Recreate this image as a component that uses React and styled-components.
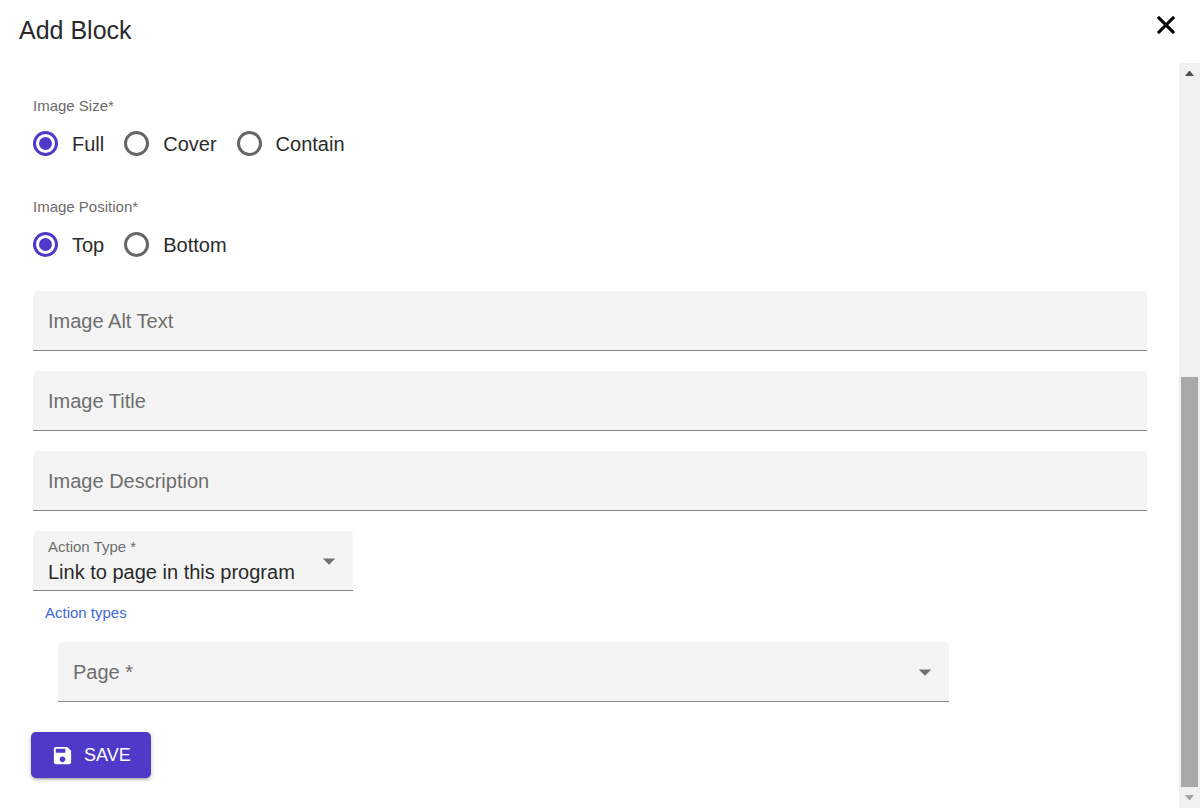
import React, { useState } from 'react';
import styled, { createGlobalStyle } from 'styled-components';

const GlobalStyle = createGlobalStyle`
    * {
        box-sizing: border-box;
    }
    body {
        margin: 0;
        background: #fff;
        color: #2a2a2a;
        font-family: "Liberation Sans", Arial, sans-serif;
        font-size: 20px;
        line-height: 24px;
    }
`;

const Dialog = styled.div`
    display: flex;
    flex-direction: column;
    height: 100vh;
`;

const Header = styled.header`
    display: flex;
    justify-content: space-between;
    align-items: flex-start;
    height: 63px;
    padding: 10px 19px;
`;

const Title = styled.h1`
    margin: 0;
    padding-top: 4px;
    font-size: 25px;
    font-weight: 400;
    line-height: 32px;
`;

const CloseButton = styled.button`
    display: flex;
    padding: 0;
    border: 0;
    background: none;
    cursor: pointer;
`;

const Body = styled.div`
    display: flex;
    flex: 1;
    min-height: 0;
`;

const Form = styled.form`
    flex: 1;
    min-width: 0;
    padding: 33px 32px 24px 33px;
    overflow: hidden;
`;

const RadioGroups = styled.div`
    display: flex;
    flex-direction: column;
    gap: 41px;
    margin-bottom: 34px;
`;

const RadioFieldset = styled.fieldset`
    min-width: 0;
    margin: 0;
    padding: 0;
    border: 0;
`;

const Legend = styled.legend`
    padding: 0;
    color: #6b6b6b;
    font-size: 15px;
    line-height: 20px;
`;

const RadioRow = styled.div`
    display: flex;
    gap: 20px;
    padding-top: 15px;
`;

const RadioLabel = styled.label`
    display: flex;
    align-items: center;
    gap: 14px;
    cursor: pointer;
`;

const Radio = styled.input`
    appearance: none;
    display: grid;
    place-items: center;
    width: 25px;
    height: 25px;
    margin: 0;
    border: 3px solid #666;
    border-radius: 50%;

    &:checked {
        border-color: #4f39c9;
    }

    &:checked::before {
        content: '';
        width: 13px;
        height: 13px;
        border-radius: 50%;
        background: #4f39c9;
    }
`;

const Fields = styled.div`
    display: flex;
    flex-direction: column;
    gap: 20px;
`;

/* label, control and arrow share one grid cell */
const Field = styled.div`
    display: grid;
    width: ${props => props.$width || '100%'};
    height: 60px;
    border-bottom: 1px solid #868686;
    border-radius: 5px 5px 0 0;
    background: #f4f4f4;

    > * {
        grid-area: 1 / 1;
    }
`;

const FieldLabel = styled.label`
    align-self: ${props => (props.$shrink ? 'start' : 'center')};
    padding: ${props => (props.$shrink ? '6px 15px 0' : '0 15px')};
    color: #6e6e6e;
    font-size: ${props => (props.$shrink ? '15px' : '20px')};
    line-height: ${props => (props.$shrink ? '20px' : '24px')};
    pointer-events: none;
`;

const control = `
    width: 100%;
    min-width: 0;
    height: 100%;
    padding: 24px 15px 2px;
    border: 0;
    border-radius: 0;
    outline: 0;
    background: none;
    color: #2a2a2a;
    font: inherit;
`;

const Input = styled.input`
    ${control}
`;

const Select = styled.select`
    ${control}
    appearance: none;
    cursor: pointer;
`;

const Arrow = styled.svg`
    place-self: center end;
    margin-right: 9px;
    fill: #707070;
    pointer-events: none;
`;

const HelpLink = styled.a`
    display: block;
    width: fit-content;
    margin: 12px 0 19px 12px;
    color: #4169d1;
    font-size: 15px;
    line-height: 20px;
    text-decoration: none;
`;

const Nested = styled.div`
    margin-left: 25px;
    margin-right: -25px;
`;

const SaveButton = styled.button`
    display: flex;
    align-items: center;
    gap: 10px;
    height: 46px;
    margin: 30px 0 0 -2px;
    padding: 0 20px;
    border: 0;
    border-radius: 5px;
    background: #4f39c9;
    box-shadow: 0 3px 2px -2px rgba(0, 0, 0, .2), 0 2px 3px rgba(0, 0, 0, .14), 0 1px 6px rgba(0, 0, 0, .12);
    color: #fff;
    font: 400 18px/24px "Liberation Sans", Arial, sans-serif;
    cursor: pointer;
`;

const ScrollTrack = styled.div`
    display: flex;
    flex-direction: column;
    width: 21px;
    background: #f0f0f0;
`;

const ScrollButton = styled.button`
    display: grid;
    place-items: center;
    height: 21px;
    padding: 0;
    border: 0;
    background: none;
    color: ${props => (props.disabled ? '#a3a3a3' : '#505050')};
`;

const ScrollRail = styled.div`
    display: flex;
    flex: 1;
    flex-direction: column;
    justify-content: flex-end;
    padding: 0 2px;
`;

const ScrollThumb = styled.div`
    height: calc(100% * 7 / 12);
    background: #a8a8a8;
`;

const IMAGE_SIZES = ['Full', 'Cover', 'Contain'];
const IMAGE_POSITIONS = ['Top', 'Bottom'];
const TEXT_FIELDS = [
    { id: 'imageAlt', label: 'Image Alt Text' },
    { id: 'imageTitle', label: 'Image Title' },
    { id: 'imageDescription', label: 'Image Description' },
];

const RadioGroup = ({ name, legend, options, value, onChange }) => (
    <RadioFieldset>
        <Legend>{legend}</Legend>
        <RadioRow>
            {options.map(option => (
                <RadioLabel key={option}>
                    <Radio
                        type="radio"
                        name={name}
                        value={option}
                        checked={value === option}
                        onChange={() => onChange(option)}
                    />
                    {option}
                </RadioLabel>
            ))}
        </RadioRow>
    </RadioFieldset>
);

const TextField = ({ id, label }) => {
    const [value, setValue] = useState('');
    const [focused, setFocused] = useState(false);

    return (
        <Field>
            <FieldLabel htmlFor={id} $shrink={focused || value !== ''}>{label}</FieldLabel>
            <Input
                id={id}
                type="text"
                value={value}
                onChange={e => setValue(e.target.value)}
                onFocus={() => setFocused(true)}
                onBlur={() => setFocused(false)}
            />
        </Field>
    );
};

const SelectField = ({ id, label, options, initial = '', width }) => {
    const [value, setValue] = useState(initial);

    return (
        <Field $width={width}>
            <FieldLabel htmlFor={id} $shrink={value !== ''}>{label}</FieldLabel>
            <Select id={id} value={value} onChange={e => setValue(e.target.value)}>
                {options.map(option => <option key={option} value={option}>{option}</option>)}
            </Select>
            <Arrow width="30" height="30" viewBox="0 0 24 24" aria-hidden="true">
                <path d="M7 10l5 5 5-5z" />
            </Arrow>
        </Field>
    );
};

const App = () => {
    const [size, setSize] = useState('Full');
    const [position, setPosition] = useState('Top');

    return (
        <>
            <GlobalStyle />
            <Dialog role="dialog" aria-labelledby="dialogTitle">
                <Header>
                    <Title id="dialogTitle">Add Block</Title>
                    <CloseButton type="button" aria-label="Close">
                        <svg width="30" height="30" viewBox="0 0 24 24" stroke="#000" strokeWidth="0.6" aria-hidden="true">
                            <path d="M19 6.41L17.59 5 12 10.59 6.41 5 5 6.41 10.59 12 5 17.59 6.41 19 12 13.41 17.59 19 19 17.59 13.41 12z" />
                        </svg>
                    </CloseButton>
                </Header>
                <Body>
                    <Form onSubmit={e => e.preventDefault()}>
                        <RadioGroups>
                            <RadioGroup
                                name="imageSize"
                                legend="Image Size*"
                                options={IMAGE_SIZES}
                                value={size}
                                onChange={setSize}
                            />
                            <RadioGroup
                                name="imagePosition"
                                legend="Image Position*"
                                options={IMAGE_POSITIONS}
                                value={position}
                                onChange={setPosition}
                            />
                        </RadioGroups>
                        <Fields>
                            {TEXT_FIELDS.map(field => <TextField key={field.id} {...field} />)}
                            <SelectField
                                id="actionType"
                                label="Action Type *"
                                options={['Link to page in this program']}
                                initial="Link to page in this program"
                                width="320px"
                            />
                        </Fields>
                        <HelpLink href="#action-types">Action types</HelpLink>
                        <Nested>
                            <SelectField id="page" label="Page *" options={['']} width="80%" />
                        </Nested>
                        <SaveButton type="submit">
                            <svg width="23" height="23" viewBox="0 0 24 24" fill="#fff" aria-hidden="true">
                                <path d="M17 3H5c-1.11 0-2 .9-2 2v14c0 1.1.89 2 2 2h14c1.1 0 2-.9 2-2V7l-4-4zm-5 16c-1.66 0-3-1.34-3-3s1.34-3 3-3 3 1.34 3 3-1.34 3-3 3zm3-10H5V5h10v4z" />
                            </svg>
                            SAVE
                        </SaveButton>
                    </Form>
                    <ScrollTrack>
                        <ScrollButton type="button" aria-label="Scroll up">
                            <svg width="9" height="5" viewBox="0 0 9 5" fill="currentColor" aria-hidden="true">
                                <path d="M0 5L4 0H5L9 5z" />
                            </svg>
                        </ScrollButton>
                        <ScrollRail>
                            <ScrollThumb />
                        </ScrollRail>
                        <ScrollButton type="button" aria-label="Scroll down" disabled>
                            <svg width="9" height="5" viewBox="0 0 9 5" fill="currentColor" aria-hidden="true">
                                <path d="M0 0L4 5H5L9 0z" />
                            </svg>
                        </ScrollButton>
                    </ScrollTrack>
                </Body>
            </Dialog>
        </>
    );
};

export default App;
